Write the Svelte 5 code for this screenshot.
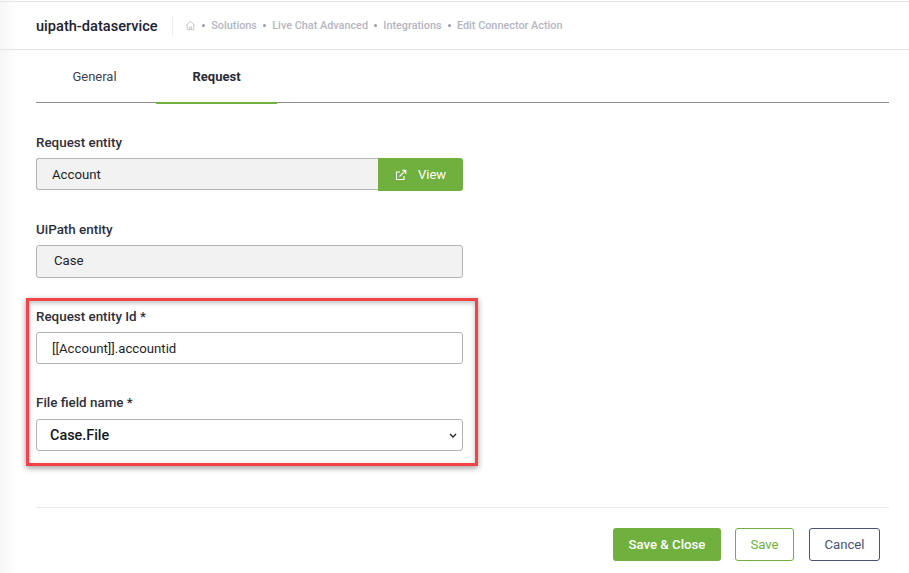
<script>
  const crumbs = ['Solutions', 'Live Chat Advanced', 'Integrations', 'Edit Connector Action'];
</script>

<div class="page">
  <header class="topbar">
    <h1 class="title">uipath-dataservice</h1>
    <nav class="crumbs">
      <svg class="home" viewBox="0 0 12 12" width="11" height="11" fill="none" stroke="#b5b5c3" stroke-width="0.8">
        <path d="M1 6 6 1.5 11 6M2.5 5v5.5h7V5M5 10.5V7.5h2v3" />
      </svg>
      {#each crumbs as c}
        <span class="dot"></span>
        <span class="crumb">{c}</span>
      {/each}
    </nav>
  </header>

  <main class="content">
    <div class="tabs">
      <div class="tab">General</div>
      <div class="tab active">Request</div>
    </div>

    <section class="form">
      <div class="field first">
        <div class="label">Request entity</div>
        <div class="group">
          <input class="input ro joined" readonly value="Account" />
          <button class="view">
            <svg viewBox="0 0 12 12" width="12" height="12" fill="none" stroke="#fff" stroke-width="1.1">
              <path d="M9 7v3.5H1.5V3H5M4.5 7.5 10.5 1.5M7 1.2h3.8V5" />
            </svg>
            <span>View</span>
          </button>
        </div>
      </div>

      <div class="field second">
        <div class="label">UiPath entity</div>
        <div class="static">Case</div>
      </div>

      <div class="field third">
        <div class="label">Request entity Id *</div>
        <input class="input" value="[[Account]].accountid" />
      </div>

      <div class="field fourth">
        <div class="label">File field name *</div>
        <div class="select-wrap">
          <select class="select">
            <option>Case.File</option>
          </select>
          <svg class="chevron" viewBox="0 0 8 5" width="8" height="5" fill="none" stroke="#222" stroke-width="1.3">
            <path d="M1 1 4 4 7 1" />
          </svg>
        </div>
      </div>
    </section>

    <footer class="footer">
      <button class="btn primary">Save &amp; Close</button>
      <button class="btn outline">Save</button>
      <button class="btn cancel">Cancel</button>
    </footer>
  </main>

  <div class="highlight"></div>
</div>

<style>
  :global(body) {
    margin: 0;
    background: #fff;
    font-family: Roboto, "Liberation Sans", sans-serif;
  }
  .page {
    position: relative;
    width: 909px;
    height: 573px;
    overflow: hidden;
    box-sizing: border-box;
    padding-top: 1px;
    background: linear-gradient(90deg, #f6f6f6 0, #fff 18px);
  }
  .topbar {
    height: 47px;
    display: flex;
    align-items: center;
    padding-left: 36px;
    border-top: 1px solid #e6e6ea;
    border-bottom: 1px solid #e4e4e8;
    box-sizing: content-box;
  }
  .title {
    margin: 0;
    font-size: 14.6px;
    line-height: 20px;
    font-weight: 500;
    color: #212131;
    width: 136px;
    white-space: nowrap;
  }
  .crumbs {
    height: 20px;
    display: flex;
    align-items: center;
    padding-left: 12px;
    border-left: 1px solid #ececf0;
    font-size: 10.85px;
    font-weight: 500;
    color: #b5b5c3;
  }
  .dot {
    width: 3px;
    height: 3px;
    border-radius: 50%;
    background: #9a9aae;
    margin: 0 6px 0 6.3px;
  }
  .content {
    padding: 0 20px 0 36px;
  }
  .tabs {
    display: flex;
    height: 52px;
    border-bottom: 1px solid #8f8f8f;
  }
  .tab {
    box-sizing: border-box;
    height: 54px;
    font-size: 13px;
    line-height: 53px;
    color: #3f4254;
    text-align: center;
  }
  .tab:first-child {
    width: 120px;
    padding-right: 3px;
  }
  .tab.active {
    width: 121px;
    font-weight: 700;
    color: #2b2b38;
    border-bottom: 2px solid #6fb03f;
  }
  .form {
    width: 427px;
    height: 404px;
    padding-top: 32px;
    box-sizing: border-box;
  }
  .field.second,
  .field.third,
  .field.fourth {
    margin-top: 31px;
  }
  .label {
    font-size: 13.4px;
    font-weight: 500;
    line-height: 16px;
    color: #2f2f3c;
    margin-bottom: 7px;
  }
  .field.fourth .label {
    margin-bottom: 8px;
  }
  .group {
    display: flex;
    align-items: flex-start;
  }
  .input, .static, .select {
    display: block;
    box-sizing: border-box;
    width: 427px;
    height: 32px;
    border: 1px solid #b3b3b3;
    border-radius: 3px;
    font-family: inherit;
    font-size: 13.2px;
    color: #1f1f2b;
    background: #fff;
    outline: none;
  }
  .input {
    padding: 0 15px;
  }
  .input.ro {
    background: #f2f2f2;
  }
  .joined {
    width: 342px;
    flex: none;
    border-right: 0;
    border-radius: 3px 0 0 3px;
  }
  .static {
    height: 33px;
    line-height: 29px;
    padding-left: 17px;
    background: #f2f2f2;
  }
  .select-wrap {
    position: relative;
  }
  .select {
    appearance: none;
    padding-left: 13px;
    font-weight: 500;
    font-size: 14.4px;
    color: #16161f;
  }
  .chevron {
    position: absolute;
    right: 6px;
    top: 14px;
  }
  .view {
    width: 85px;
    height: 33px;
    border: 0;
    border-radius: 0 3px 3px 0;
    background: #6fb03f;
    color: #fff;
    font-family: inherit;
    font-size: 13px;
    font-weight: 400;
    display: flex;
    align-items: center;
    padding: 0 0 0 17px;
    gap: 11px;
  }
  .footer {
    display: flex;
    justify-content: flex-end;
    align-items: flex-start;
    gap: 14px;
    border-top: 1px solid #ebebeb;
    padding: 20px 9px 0 0;
  }
  .btn {
    height: 33px;
    box-sizing: border-box;
    border-radius: 3px;
    font-family: inherit;
    font-size: 13.2px;
    font-weight: 400;
    padding: 0;
    background: #fff;
  }
  .primary {
    width: 108px;
    background: #6fb03f;
    border: 0;
    color: #fff;
    font-weight: 500;
  }
  .outline {
    width: 59px;
    border: 1px solid #6fb03f;
    color: #6fb03f;
  }
  .cancel {
    width: 71px;
    margin-left: 1px;
    border: 1px solid #4c5275;
    color: #4c5275;
  }
  .highlight {
    position: absolute;
    left: 26px;
    top: 298px;
    width: 452px;
    height: 168px;
    box-sizing: border-box;
    border: 3px solid #f44347;
    box-shadow: 0 2px 6px rgba(0, 0, 0, 0.4), inset 0 2px 5px rgba(0, 0, 0, 0.25);
    pointer-events: none;
  }
</style>
